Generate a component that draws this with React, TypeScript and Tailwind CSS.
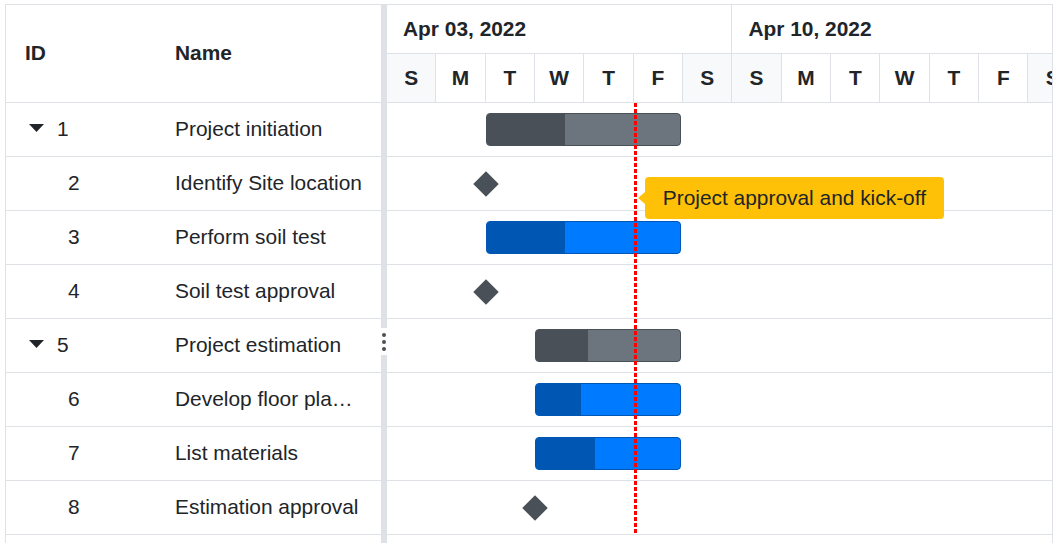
import React from "react";

const DAY = 49.35;
const DAYS = ["S", "M", "T", "W", "T", "F", "S", "S", "M", "T", "W", "T", "F", "S"];

type Task = {
  id: number;
  name: string;
  parent?: boolean;
  type: "summary" | "task" | "milestone";
  start: number;
  days?: number;
  progress?: number;
};

const tasks: Task[] = [
  { id: 1, name: "Project initiation", parent: true, type: "summary", start: 2, days: 4, progress: 40.5 },
  { id: 2, name: "Identify Site location", type: "milestone", start: 2 },
  { id: 3, name: "Perform soil test", type: "task", start: 2, days: 4, progress: 40.5 },
  { id: 4, name: "Soil test approval", type: "milestone", start: 2 },
  { id: 5, name: "Project estimation", parent: true, type: "summary", start: 3, days: 3, progress: 36 },
  { id: 6, name: "Develop floor plan for estimation", type: "task", start: 3, days: 3, progress: 31 },
  { id: 7, name: "List materials", type: "task", start: 3, days: 3, progress: 41 },
  { id: 8, name: "Estimation approval", type: "milestone", start: 3 },
];

function TaskBar({ task }: { task: Task }) {
  if (task.type === "milestone") {
    return (
      <div
        className="absolute top-0 flex h-full w-[26px] items-center justify-center"
        style={{ left: task.start * DAY - 13 }}
      >
        <div className="h-[18px] w-[18px] rotate-45 bg-[#495057]" />
      </div>
    );
  }
  const summary = task.type === "summary";
  return (
    <div
      className={`absolute top-[10px] h-[33px] overflow-hidden rounded-[4px] border ${
        summary ? "border-[#495057] bg-[#6c757d]" : "border-[#0056b3] bg-[#007bff]"
      }`}
      style={{ left: task.start * DAY, width: (task.days ?? 1) * DAY - 2 }}
    >
      <div
        className={`h-full ${summary ? "bg-[#495057]" : "bg-[#0056b3]"}`}
        style={{ width: `${task.progress}%` }}
      />
    </div>
  );
}

export default function App() {
  return (
    <div className="h-[543px] w-[1056px] overflow-hidden bg-white font-['Liberation_Sans',Arial,sans-serif] text-[20.9px] text-[#212529]">
      <div className="ml-[5px] mt-[4px] flex h-[560px] w-[1048px] border border-[#dee2e6]">
        {/* Tree grid */}
        <div className="w-[375px] shrink-0">
          <div className="flex h-[98px] items-center border-b border-[#dee2e6] pb-[2px] font-bold">
            <div className="w-[149px] pl-[19px]">ID</div>
            <div className="pl-[20px]">Name</div>
          </div>
          {tasks.map((task) => (
            <div key={task.id} className="flex h-[54px] items-center border-b border-[#dee2e6] pb-[2px]">
              <div className="flex w-[149px] items-center">
                {task.parent ? (
                  <>
                    <svg className="ml-[23px] h-[8px] w-[15px]" viewBox="0 0 15 8">
                      <path d="M0 0h15L7.5 8z" fill="#212529" />
                    </svg>
                    <span className="ml-[13px]">{task.id}</span>
                  </>
                ) : (
                  <span className="ml-[62px]">{task.id}</span>
                )}
              </div>
              <div className="w-[226px] truncate pl-[20px] pr-[18px]">{task.name}</div>
            </div>
          ))}
          <div className="h-[54px] border-b border-[#dee2e6]" />
        </div>

        {/* Splitter */}
        <div className="flex w-[6px] shrink-0 flex-col">
          <div className="h-[323px] bg-[#dee2e6]" />
          <div className="flex h-[27px] flex-col items-center justify-center gap-[3px]">
            <div className="h-[4px] w-[4px] rounded-full bg-[#495057]" />
            <div className="h-[4px] w-[4px] rounded-full bg-[#495057]" />
            <div className="h-[4px] w-[4px] rounded-full bg-[#495057]" />
          </div>
          <div className="flex-1 bg-[#dee2e6]" />
        </div>

        {/* Chart */}
        <div className="min-w-0 flex-1 overflow-hidden">
          <div className="w-[700px] font-bold">
            <div className="flex h-[49px]">
              {["Apr 03, 2022", "Apr 10, 2022"].map((d) => (
                <div
                  key={d}
                  className="flex w-[345.45px] shrink-0 items-center border-r border-b border-[#dee2e6] pl-[16px]"
                >
                  {d}
                </div>
              ))}
            </div>
            <div className="flex h-[49px]">
              {DAYS.map((d, i) => (
                <div
                  key={i}
                  className={`flex w-[49.35px] shrink-0 items-center justify-center border-r border-b border-[#dee2e6] ${
                    d === "S" ? "bg-[#f8f9fa]" : "bg-white"
                  }`}
                >
                  {d}
                </div>
              ))}
            </div>
          </div>

          <div className="relative">
            {tasks.map((task) => (
              <div key={task.id} className="relative h-[54px] border-b border-[#dee2e6]">
                <TaskBar task={task} />
              </div>
            ))}
            <div className="h-[54px] border-b border-[#dee2e6]" />

            {/* Event marker */}
            <div
              className="absolute top-0 h-[432px] w-[3px] bg-[repeating-linear-gradient(to_bottom,#ff0000_0_4px,transparent_4px_6px)]"
              style={{ left: 5 * DAY }}
            />
            <div
              className="absolute top-[74px] flex h-[42px] items-center rounded-[4px] bg-[#ffc107] px-[18px] whitespace-nowrap"
              style={{ left: 5 * DAY + 11 }}
            >
              <div className="absolute left-[-7px] top-[15px] h-0 w-0 border-y-[6px] border-r-[7px] border-y-transparent border-r-[#ffc107]" />
              Project approval and kick-off
            </div>
          </div>
        </div>
      </div>
    </div>
  );
}
